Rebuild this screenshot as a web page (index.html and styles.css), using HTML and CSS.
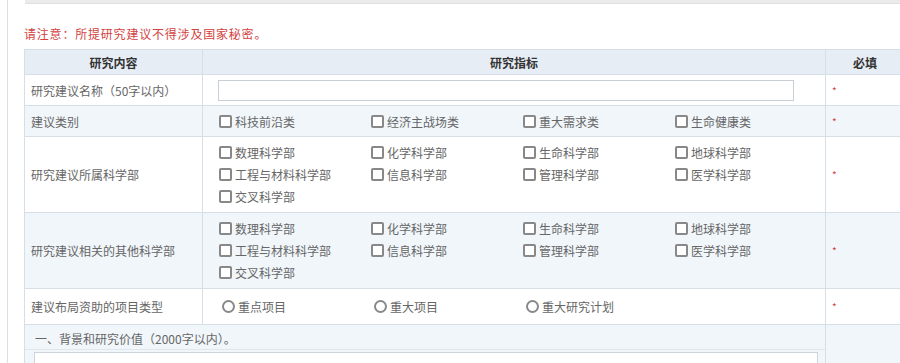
FILE: index.html
```html
<!DOCTYPE html>
<html lang="zh-CN">

<head>
    <meta charset="UTF-8">
    <meta name="viewport" content="width=device-width, initial-scale=1.0">
    <title>研究建议</title>
    <link rel="stylesheet" href="styles.css">
</head>

<body>
    <div class="page">
        <!-- Top toolbar strip -->
        <div class="top-strip"></div>

        <p class="notice">请注意：所提研究建议不得涉及国家秘密。</p>

        <table class="form-table">
            <colgroup>
                <col class="col-name">
                <col class="col-field">
                <col class="col-req">
            </colgroup>
            <thead>
                <tr>
                    <th>研究内容</th>
                    <th>研究指标</th>
                    <th>必填</th>
                </tr>
            </thead>
            <tbody>
                <tr class="row-title">
                    <td class="label">研究建议名称（50字以内）</td>
                    <td class="field"><input class="text-input" type="text"></td>
                    <td class="req">*</td>
                </tr>
                <tr class="row-alt row-single">
                    <td class="label">建议类别</td>
                    <td class="field">
                        <div class="options">
                            <label class="option"><span class="check"></span>科技前沿类</label>
                            <label class="option"><span class="check"></span>经济主战场类</label>
                            <label class="option"><span class="check"></span>重大需求类</label>
                            <label class="option"><span class="check"></span>生命健康类</label>
                        </div>
                    </td>
                    <td class="req">*</td>
                </tr>
                <tr class="row-multi">
                    <td class="label">研究建议所属科学部</td>
                    <td class="field">
                        <div class="options">
                            <label class="option"><span class="check"></span>数理科学部</label>
                            <label class="option"><span class="check"></span>化学科学部</label>
                            <label class="option"><span class="check"></span>生命科学部</label>
                            <label class="option"><span class="check"></span>地球科学部</label>
                            <label class="option"><span class="check"></span>工程与材料科学部</label>
                            <label class="option"><span class="check"></span>信息科学部</label>
                            <label class="option"><span class="check"></span>管理科学部</label>
                            <label class="option"><span class="check"></span>医学科学部</label>
                            <label class="option"><span class="check"></span>交叉科学部</label>
                        </div>
                    </td>
                    <td class="req">*</td>
                </tr>
                <tr class="row-alt row-multi">
                    <td class="label">研究建议相关的其他科学部</td>
                    <td class="field">
                        <div class="options">
                            <label class="option"><span class="check"></span>数理科学部</label>
                            <label class="option"><span class="check"></span>化学科学部</label>
                            <label class="option"><span class="check"></span>生命科学部</label>
                            <label class="option"><span class="check"></span>地球科学部</label>
                            <label class="option"><span class="check"></span>工程与材料科学部</label>
                            <label class="option"><span class="check"></span>信息科学部</label>
                            <label class="option"><span class="check"></span>管理科学部</label>
                            <label class="option"><span class="check"></span>医学科学部</label>
                            <label class="option"><span class="check"></span>交叉科学部</label>
                        </div>
                    </td>
                    <td class="req">*</td>
                </tr>
                <tr class="row-radio">
                    <td class="label">建议布局资助的项目类型</td>
                    <td class="field">
                        <div class="options radios">
                            <label class="option"><span class="radio"></span>重点项目</label>
                            <label class="option"><span class="radio"></span>重大项目</label>
                            <label class="option"><span class="radio"></span>重大研究计划</label>
                        </div>
                    </td>
                    <td class="req">*</td>
                </tr>
                <tr class="row-alt">
                    <td colspan="2" class="section">
                        <div class="section-title">一、背景和研究价值（2000字以内）。</div>
                        <div class="section-body">
                            <div class="text-area"></div>
                        </div>
                    </td>
                    <td></td>
                </tr>
            </tbody>
        </table>
    </div>
</body>

</html>
```

FILE: styles.css
```css
html,
body {
    overflow: hidden;
}

body {
    margin: 0;
    background-color: #ffffff;
    font-family: "Noto Sans CJK SC", "Noto Sans", sans-serif;
    font-size: 12px;
    color: #666;
}

/* Page frame */
.page {
    margin-left: 7px;
    border-left: 1px solid #dedede;
    padding-left: 16px;
    min-height: 363px;
}

.top-strip {
    height: 3px;
    margin-left: 1px;
    background-color: #ebebeb;
    border-bottom: 1px solid #e0e0e0;
}

.notice {
    margin: 0;
    padding-top: 22px;
    height: 23px;
    line-height: 16px;
    color: #d2423f;
    font-size: 12px;
    letter-spacing: 0.8px;
}

/* Form table */
.form-table {
    width: 880px;
    border-collapse: collapse;
    table-layout: fixed;
}

.col-name {
    width: 178px;
}

.col-field {
    width: 623px;
}

.col-req {
    width: 79px;
}

.form-table th,
.form-table td {
    border: 1px solid #d6dfe8;
    padding: 0 6px;
    text-align: left;
    vertical-align: middle;
}

.form-table th {
    height: 24px;
    background-color: #e6edf5;
    color: #333;
    font-weight: bold;
    text-align: center;
}

.form-table td.field {
    padding: 0;
}

.row-alt td {
    background-color: #f1f6fb;
}

.row-title td {
    height: 30px;
}

.row-single td {
    height: 30px;
}

.row-radio td {
    height: 35px;
}

.label {
    color: #666;
}

.req {
    color: #d2423f;
    font-size: 10px;
}

.text-input {
    display: block;
    width: 576px;
    height: 21px;
    margin-left: 15px;
    box-sizing: border-box;
    border: 1px solid #c9cfd6;
    background-color: #fff;
}

/* Options */
.options {
    display: grid;
    grid-template-columns: repeat(3, 152px) 1fr;
    padding-left: 16px;
}

.row-multi .options {
    padding-top: 4px;
    padding-bottom: 5px;
}

.option {
    display: flex;
    align-items: center;
    gap: 3px;
    height: 22px;
    color: #666;
}

.check {
    width: 13px;
    height: 13px;
    box-sizing: border-box;
    border: 2px solid #888;
    border-radius: 2px;
    background-color: #fff;
}

.radios {
    padding-left: 19px;
}

.radio {
    width: 13px;
    height: 13px;
    box-sizing: border-box;
    border: 2px solid #888;
    border-radius: 50%;
    background-color: #fff;
}

/* Section with text area */
.form-table td.section {
    padding: 0;
    vertical-align: top;
}

.section-title {
    height: 24px;
    line-height: 28px;
    padding-left: 10px;
    border-bottom: 1px solid #dfe6ee;
}

.section-body {
    padding: 2px 7px 0 9px;
}

.text-area {
    height: 40px;
    border: 1px solid #ccd3da;
    background-color: #fff;
}
```
